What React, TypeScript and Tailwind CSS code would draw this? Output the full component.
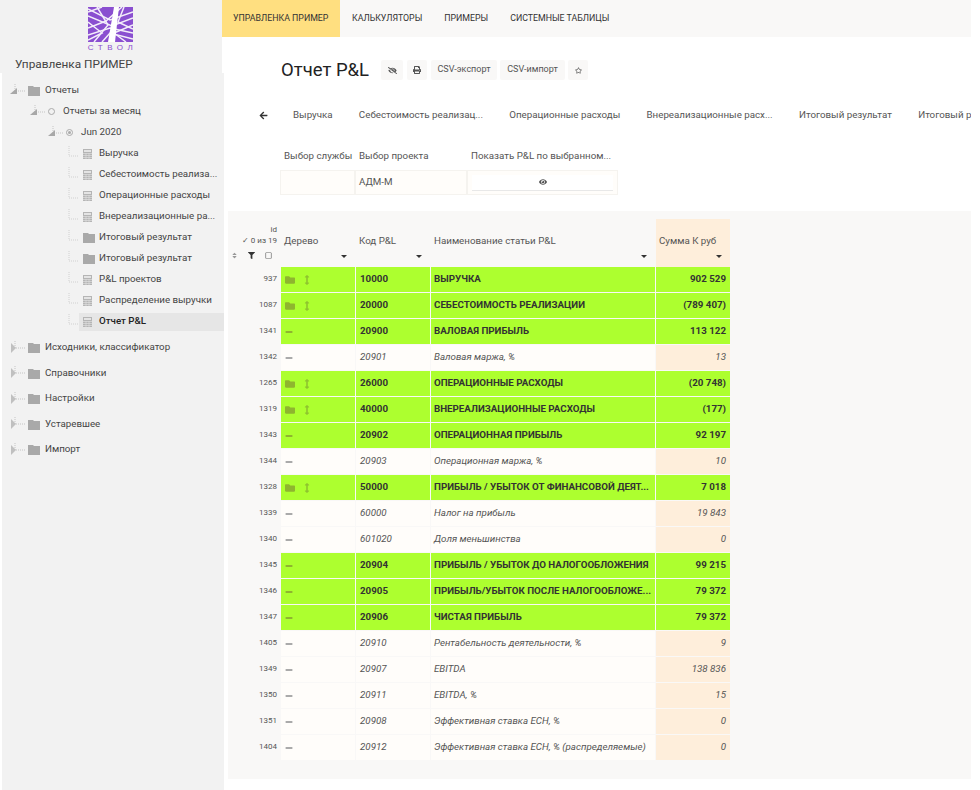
import { FaArrowLeft, FaArrowsAltV, FaEye, FaEyeSlash, FaFilter, FaFolder, FaMinus, FaPrint, FaRegSquare, FaRegStar, FaSort } from "react-icons/fa";

const font = "font-['Roboto',sans-serif]";

const Logo = () => (
  <div className="flex flex-col items-center">
    <svg width="45" height="35" viewBox="0 0 45 35">
      <rect width="45" height="35" fill="#8a4fd0" />
      <g stroke="#ffffff" strokeWidth="1.5" fill="none" opacity="0.9">
        <path d="M0 2 L22 13 L45 5" />
        <path d="M0 9 L24 19 L45 11" />
        <path d="M0 21 L18 14 L34 0" />
        <path d="M0 28 L22 21 L45 26" />
        <path d="M9 0 L20 18 L6 35" />
        <path d="M45 18 L26 26 L38 35" />
        <path d="M14 35 L22 26 L45 32" />
        <path d="M36 0 L30 15 L45 22" />
        <path d="M0 15 L14 26 L0 33" />
        <path d="M0 5 L14 0" />
      </g>
      <path d="M26 0 L31 0 L27 35 L20 35 Z" fill="#ffffff" />
    </svg>
    <span className="text-[#8a4fd0] text-[8px] leading-[10px] tracking-[4.5px] font-['Liberation_Sans',sans-serif] pl-[4px] mt-[1px]">СТВОЛ</span>
  </div>
);

const TreeFolder = () => (
  <svg width="12" height="11" viewBox="0 0 12 11" className="shrink-0">
    <path d="M0 1 H5 L6 2 H12 V11 H0 Z" fill="#a9a9a9" />
  </svg>
);

const Calc = () => (
  <svg width="9" height="10" viewBox="0 0 9 10" className="shrink-0">
    <rect width="9" height="10" fill="#b5b5b5" />
    <rect x="1" y="1" width="7" height="2" fill="#e4e4e4" />
    <path d="M0 4.5 H9 M0 6.5 H9 M0 8.5 H9 M3 4 V10 M6 4 V10" stroke="#e4e4e4" strokeWidth="0.6" />
  </svg>
);

const Toggle = ({ open }: { open: boolean }) => (
  <svg width="16" height="16" viewBox="0 0 16 16" className="shrink-0">
    <path d="M6 1 V8 H16" stroke="#c4c4c4" strokeWidth="1" strokeDasharray="1 1" fill="none" />
    {open ? <path d="M1 11 L8 11 L8 5 Z" fill="#a8a8a8" /> : <path d="M2 3 L7 8 L2 13 Z" fill="#c0c0c0" />}
  </svg>
);

const Leaf = () => (
  <svg width="12" height="16" viewBox="0 0 12 16" className="shrink-0">
    <path d="M1 0 V10 H11" stroke="#d0d0d0" strokeWidth="1" strokeDasharray="1 1" fill="none" />
  </svg>
);

const leaves = [
  { title: "Выручка", calc: true },
  { title: "Себестоимость реализа...", calc: true },
  { title: "Операционные расходы", calc: true },
  { title: "Внереализационные ра...", calc: true },
  { title: "Итоговый результат", calc: false },
  { title: "Итоговый результат", calc: false },
  { title: "P&L проектов", calc: true },
  { title: "Распределение выручки", calc: true },
];

const Sidebar = () => (
  <aside className="w-[222px] shrink-0 min-h-[790px] flex flex-col text-[9.75px] text-[#444]">
    <div className="bg-[#f2f2f2] h-[73px]">
      <div className="pt-[7px] flex justify-center pr-[1px]">
        <Logo />
      </div>
      <div className="pl-[15px] pt-[2px] text-[11.8px] leading-[18px] text-[#444]">Управленка ПРИМЕР</div>
    </div>
    <div className="bg-[#f2f2f2] ml-[2px] w-[222px] flex-1 pt-[7px]">
      <div className="h-[21px] flex items-center pl-[7px]">
        <Toggle open />
        <span className="ml-[3px]"><TreeFolder /></span>
        <span className="ml-[5px]">Отчеты</span>
      </div>
      <div className="h-[21px] flex items-center pl-[27px]">
        <Toggle open />
        <span className="ml-[3px] w-[7px] h-[7px] rounded-full border border-[#aaa] shrink-0" />
        <span className="ml-[8px]">Отчеты за месяц</span>
      </div>
      <div className="h-[21px] flex items-center pl-[45px]">
        <Toggle open />
        <span className="ml-[3px] w-[7px] h-[7px] rounded-full border border-[#aaa] shrink-0 flex items-center justify-center">
          <span className="w-[3px] h-[3px] rounded-full bg-[#aaa]" />
        </span>
        <span className="ml-[8px]">Jun 2020</span>
      </div>
      {leaves.map((item, index) => (
        <div key={index} className="h-[21px] flex items-center pl-[66px]">
          <Leaf />
          <span className={item.calc ? "ml-[3px]" : "ml-[3px] -mr-[3px]"}>{item.calc ? <Calc /> : <TreeFolder />}</span>
          <span className="ml-[7px] whitespace-nowrap">{item.title}</span>
        </div>
      ))}
      <div className="h-[21px] flex items-center pl-[66px]">
        <Leaf />
        <div className="flex items-center bg-[#e6e6e6] w-[145px] h-[18px] -ml-[1px] pl-[4px]">
          <Calc />
          <span className="ml-[7px] font-medium text-[#222]">Отчет P&amp;L</span>
        </div>
      </div>
      <div className="pt-[3px]">
        {["Исходники, классификатор", "Справочники", "Настройки", "Устаревшее", "Импорт"].map((title) => (
          <div key={title} className="h-[25.5px] flex items-center pl-[7px]">
            <Toggle open={false} />
            <span className="ml-[3px]"><TreeFolder /></span>
            <span className="ml-[5px]">{title}</span>
          </div>
        ))}
      </div>
    </div>
  </aside>
);

const topMenu = ["КАЛЬКУЛЯТОРЫ", "ПРИМЕРЫ", "СИСТЕМНЫЕ ТАБЛИЦЫ"];

const TopBar = () => (
  <div className="h-[37px] bg-[#f9f8f7] flex text-[8.8px] text-[#333]">
    <div className="bg-[#ffdf80] w-[118px] pl-[11px] flex items-center whitespace-nowrap">УПРАВЛЕНКА ПРИМЕР</div>
    <div className="flex items-center gap-[22px] pl-[12px]">
      {topMenu.map((title) => (
        <span key={title}>{title}</span>
      ))}
    </div>
  </div>
);

const tabs = ["Выручка", "Себестоимость реализац...", "Операционные расходы", "Внереализационные расх...", "Итоговый результат", "Итоговый результат"];

type Row = { id: number; code: string; name: string; sum: string; bold: boolean; folder?: boolean };

const rows: Row[] = [
  { id: 937, code: "10000", name: "ВЫРУЧКА", sum: "902 529", bold: true, folder: true },
  { id: 1087, code: "20000", name: "СЕБЕСТОИМОСТЬ РЕАЛИЗАЦИИ", sum: "(789 407)", bold: true, folder: true },
  { id: 1341, code: "20900", name: "ВАЛОВАЯ ПРИБЫЛЬ", sum: "113 122", bold: true },
  { id: 1342, code: "20901", name: "Валовая маржа, %", sum: "13", bold: false },
  { id: 1265, code: "26000", name: "ОПЕРАЦИОННЫЕ РАСХОДЫ", sum: "(20 748)", bold: true, folder: true },
  { id: 1319, code: "40000", name: "ВНЕРЕАЛИЗАЦИОННЫЕ РАСХОДЫ", sum: "(177)", bold: true, folder: true },
  { id: 1343, code: "20902", name: "ОПЕРАЦИОННАЯ ПРИБЫЛЬ", sum: "92 197", bold: true },
  { id: 1344, code: "20903", name: "Операционная маржа, %", sum: "10", bold: false },
  { id: 1328, code: "50000", name: "ПРИБЫЛЬ / УБЫТОК ОТ ФИНАНСОВОЙ ДЕЯТ...", sum: "7 018", bold: true, folder: true },
  { id: 1339, code: "60000", name: "Налог на прибыль", sum: "19 843", bold: false },
  { id: 1340, code: "601020", name: "Доля меньшинства", sum: "0", bold: false },
  { id: 1345, code: "20904", name: "ПРИБЫЛЬ / УБЫТОК ДО НАЛОГООБЛОЖЕНИЯ", sum: "99 215", bold: true },
  { id: 1346, code: "20905", name: "ПРИБЫЛЬ/УБЫТОК ПОСЛЕ НАЛОГООБЛОЖЕ...", sum: "79 372", bold: true },
  { id: 1347, code: "20906", name: "ЧИСТАЯ ПРИБЫЛЬ", sum: "79 372", bold: true },
  { id: 1405, code: "20910", name: "Рентабельность деятельности, %", sum: "9", bold: false },
  { id: 1349, code: "20907", name: "EBITDA", sum: "138 836", bold: false },
  { id: 1350, code: "20911", name: "EBITDA, %", sum: "15", bold: false },
  { id: 1351, code: "20908", name: "Эффективная ставка ЕСН, %", sum: "0", bold: false },
  { id: 1404, code: "20912", name: "Эффективная ставка ЕСН, % (распределяемые)", sum: "0", bold: false },
];

const Caret = () => <span className="w-0 h-0 border-x-[3px] border-x-transparent border-t-[3px] border-t-[#333]" />;

const HeaderCell = ({ title, className }: { title: string; className: string }) => (
  <div className={`flex flex-col justify-between pl-[3px] pr-[8px] pb-[9px] pt-[16px] text-[9.75px] text-[#555] ${className}`}>
    <span className="leading-[12px]">{title}</span>
    <span className="self-end flex"><Caret /></span>
  </div>
);

const TableRow = ({ row }: { row: Row }) => {
  const bg = row.bold ? "bg-[#adff2f]" : "bg-[#fffdfa]";
  const text = row.bold ? "font-bold text-[#333]" : "italic text-[#555]";
  return (
    <div className={`flex h-[26px] text-[9.75px] ${text}`}>
      <div className="w-[53px] shrink-0 text-right pr-[4px] leading-[24px] text-[8px] font-normal not-italic text-[#555]">{row.id}</div>
      <div className={`w-[74px] mr-[1px] mb-[1px] shrink-0 flex items-center pl-[4px] ${bg}`}>
        {row.folder ? <FaFolder className="text-[10px] text-[#8fb52f]" /> : <FaMinus className={`text-[8px] scale-y-125 ${row.bold ? "text-[#8fb52f]" : "text-[#aaa]"}`} />}
        {row.folder && <FaArrowsAltV className="text-[10px] text-[#8fc42f] ml-[7px]" />}
      </div>
      <div className={`w-[74px] mr-[1px] mb-[1px] shrink-0 flex items-center pl-[4px] ${bg}`}>{row.code}</div>
      <div className={`w-[224px] mr-[1px] mb-[1px] shrink-0 flex items-center pl-[3px] whitespace-nowrap ${bg}`}>{row.name}</div>
      <div className={`w-[74px] mb-[1px] shrink-0 flex items-center justify-end pr-[4px] ${row.bold ? "bg-[#adff2f]" : "bg-[#feeedb]"}`}>{row.sum}</div>
    </div>
  );
};

const PnlTable = () => (
  <div className="bg-[#f9f8f7] mt-[16px] w-[743px] ml-[6px] pt-[8px] pb-[18px]">
    <div className="flex h-[48px]">
      <div className="w-[53px] shrink-0 flex flex-col items-end pr-[4px] pt-[5px] text-[8px] leading-[11px] text-[#555]">
        <span>id</span>
        <span>✓ 0 из 19</span>
        <span className="flex items-center gap-[10px] mt-[6px] mr-[5px] text-[#666]">
          <FaSort className="text-[7px] text-[#999]" />
          <FaFilter className="text-[7px] text-[#333]" />
          <FaRegSquare className="text-[7px]" />
        </span>
      </div>
      <HeaderCell title="Дерево" className="w-[74px] mr-[1px]" />
      <HeaderCell title="Код P&L" className="w-[74px] mr-[1px]" />
      <HeaderCell title="Наименование статьи P&L" className="w-[224px] mr-[1px]" />
      <HeaderCell title="Сумма К руб" className="w-[74px] bg-[#feeedb]" />
    </div>
    {rows.map((row) => (
      <TableRow key={row.id} row={row} />
    ))}
  </div>
);

const App = () => (
  <div className={`${font} w-[980px] h-[790px] overflow-hidden bg-white flex`}>
    <Sidebar />
    <main className="w-[749px] shrink-0 overflow-hidden">
      <TopBar />
      <div className="flex items-center pl-[59px] pt-[23px] h-[20px] box-content">
        <h1 className="w-[89px] shrink-0 text-[18.5px] leading-[20px] text-[#222] whitespace-nowrap">Отчет P&amp;L</h1>
        <div className="flex gap-[4px] ml-[11px] text-[9px] text-[#555]">
          <button className="h-[20px] w-[22px] bg-[#f9f8f7] rounded-[2px] flex items-center justify-center"><FaEyeSlash className="text-[9px]" /></button>
          <button className="h-[20px] w-[20px] bg-[#f9f8f7] rounded-[2px] flex items-center justify-center"><FaPrint className="text-[8px]" /></button>
          <button className="h-[20px] w-[66px] bg-[#f9f8f7] rounded-[2px]">CSV-экспорт</button>
          <button className="h-[20px] w-[65px] -ml-[1px] bg-[#f9f8f7] rounded-[2px]">CSV-импорт</button>
          <button className="h-[20px] w-[20px] bg-[#f9f8f7] rounded-[2px] flex items-center justify-center -ml-[1px]"><FaRegStar className="text-[7px]" /></button>
        </div>
      </div>
      <div className="flex items-center h-[20px] mt-[25px] pl-[37px] text-[9.75px] text-[#555] whitespace-nowrap">
        <FaArrowLeft className="text-[9px] text-[#333] shrink-0" />
        <div className="flex gap-[26.3px] ml-[25px]">
          {tabs.map((tab, index) => (
            <span key={index}>{tab}</span>
          ))}
        </div>
      </div>
      <div className="pl-[58px] pt-[24px]">
        <div className="flex text-[9.75px] text-[#555] h-[22px] items-start leading-[14px]">
          <span className="w-[76px] pl-[4px]">Выбор службы</span>
          <span className="w-[112px] pl-[3px]">Выбор проекта</span>
          <span className="pl-[3px]">Показать P&amp;L по выбранном...</span>
        </div>
        <div className="flex h-[25px] w-[338px] border border-[#f5f3ef] bg-[#fffdfa] text-[9.75px] text-[#555] -mt-[1px]">
          <div className="w-[75px] border-r-2 border-[#f5f3ef]" />
          <div className="w-[112px] border-r-2 border-[#f5f3ef] flex items-center pl-[3px]">АДМ-М</div>
          <div className="flex-1 flex items-center justify-center px-[4px]">
            <div className="w-full h-[16px] bg-white border-b border-[#e8e8e8] flex items-center justify-center">
              <FaEye className="text-[8px]" />
            </div>
          </div>
        </div>
      </div>
      <PnlTable />
    </main>
  </div>
);

export default App;
